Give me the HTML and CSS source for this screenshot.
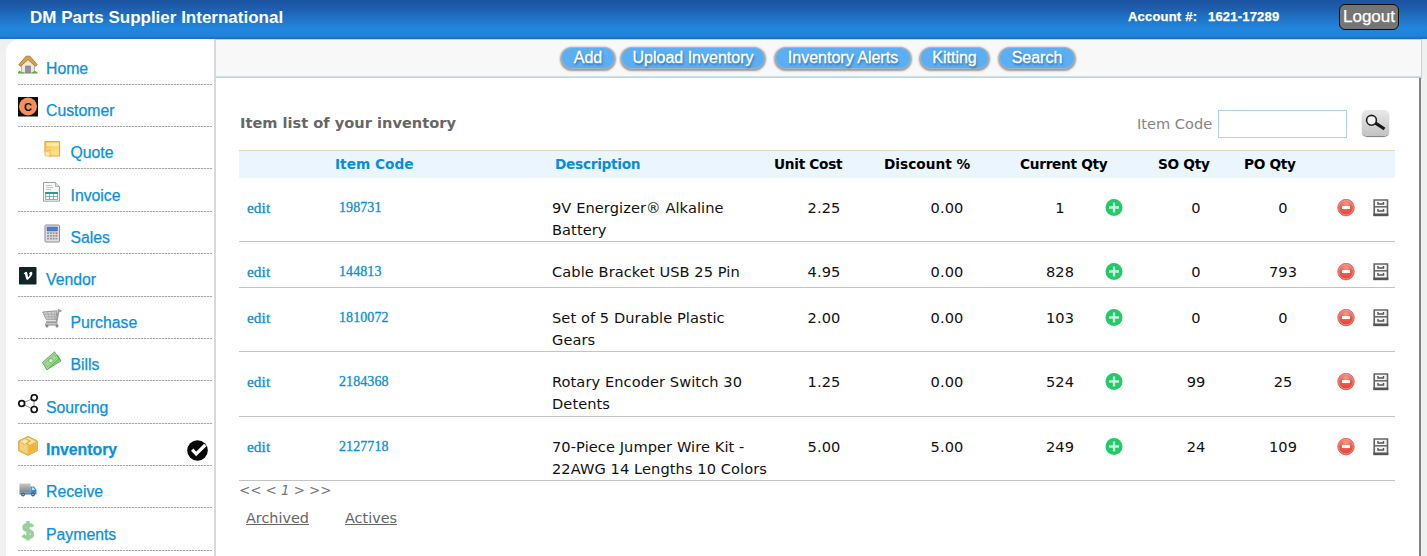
FILE: index.html
```html
<!DOCTYPE html>
<html lang="en">
<head>
<meta charset="utf-8">
<title>DM Parts Supplier International</title>
<link rel="stylesheet" href="styles.css">
</head>
<body>
<svg class="defs" aria-hidden="true">
  <defs>
    <radialGradient id="redfill" cx=".5" cy=".25" r=".75"><stop offset="0" stop-color="#f49b8e"/><stop offset=".6" stop-color="#ea5549"/><stop offset="1" stop-color="#d9443d"/></radialGradient>
    <linearGradient id="amber" x1="0" y1="0" x2="1" y2="1"><stop offset="0" stop-color="#fbc44b"/><stop offset="1" stop-color="#ffe79a"/></linearGradient>
    <linearGradient id="steel" x1="0" y1="0" x2="0" y2="1"><stop offset="0" stop-color="#c9c9cb"/><stop offset="1" stop-color="#7f8184"/></linearGradient>
  </defs>
  <symbol id="plus" viewBox="0 0 18 18"><circle cx="9" cy="8.500" r="8.500" fill="#20cb68"/><path d="M9 3.500v10M4 8.500h10" stroke="#c8f5d9" stroke-width="2.3"/></symbol>
  <symbol id="minus" viewBox="0 0 18 18"><circle cx="9" cy="8.600" r="8.300" fill="url(#redfill)" stroke="#d5574e" stroke-width=".7"/><circle cx="9" cy="8.600" r="7.300" fill="none" stroke="#f6a59c" stroke-width=".7"/><rect x="5" y="7.100" width="8" height="3" rx=".6" fill="#fff"/></symbol>
  <symbol id="cabinet" viewBox="0 0 16 18"><path d="M1.200 1h13.300v15H1.200z" fill="#f4f4f4" stroke="#646464" stroke-width="1.6"/><path d="M.4 14.500h14.900v2.700H.4z" fill="#555"/><path d="M1.200 7.800h13.300" stroke="#646464" stroke-width="1.5"/><path d="M5 3v2h5.500v-2M5 10v2h5.500v-2" fill="none" stroke="#555" stroke-width="1.4"/></symbol>
</svg>
<header class="top">
  <div class="brand">DM Parts Supplier International</div>
  <div class="account"><span class="acct-label">Account #:</span><span class="acct-num">1621-17289</span></div>
  <a class="logout">Logout</a>
</header>
<div class="shell">
  <nav class="side">
    <ul>
      <li><svg class="ico" viewBox="0 0 20 20"><path d="M3.500 10L10 4l6.500 6v8h-13z" fill="#eee8dc" stroke="#aaa194" stroke-width=".7"/><path d="M7.500 18v-7h5v7z" fill="#90949a" stroke="#70757a" stroke-width=".6"/><path d="M.8 9.700L8 1.200h4l7.300 8.500-2 1.500L10 4.600l-7.300 6.600z" fill="#d8a14b" stroke="#a86f29" stroke-width=".8"/><path d="M0 17.500q1.500-3 3-.5l3.500.6v1H0zM13 18.500l1-1q3-3 5.500 0v1z" fill="#61ad3e"/></svg><span>Home</span></li>
      <li><svg class="ico" viewBox="0 0 20 20"><path d="M0 0h20v19.500H0z" fill="#0a0a0a"/><circle cx="10" cy="9.500" r="9" fill="#f5905c"/><text x="10" y="13.500" class="c-mark">C</text></svg><span>Customer</span></li>
      <li class="sub"><svg class="ico" viewBox="0 0 20 20"><path d="M3 2.500h14.500v14.500H7.500L3 12.500z" fill="url(#amber)" stroke="#eda638" stroke-width="1.200"/><path d="M4.500 4h12v3h-12z" fill="#fff3c4" opacity=".7"/><path d="M3 11.500q3 2 4.500-.5 0 4 1.500 6H4q-1 0-1-1z" fill="#fff0bf" stroke="#eda638" stroke-width=".8"/></svg><span>Quote</span></li>
      <li class="sub"><svg class="ico" viewBox="0 0 20 20"><path d="M1.500.5h12l4 4v14.700h-16z" fill="#f7f8f8" stroke="#9ba2a5"/><path d="M13.500.5v4h4" fill="#dfe3e4" stroke="#9ba2a5" stroke-width=".8"/><path d="M4 3.500h6M4 5.500h7M4 7.500h5" stroke="#c3c7ca"/><path d="M3 10h13v2H3z" fill="#2c9b8f"/><path d="M3.500 12v5.500h12V12M3.500 14.500h12M7.500 12v5.500M11.500 12v5.500" fill="none" stroke="#6e9e9a" stroke-width=".8"/></svg><span>Invoice</span></li>
      <li class="sub"><svg class="ico" viewBox="0 0 20 20"><rect x="3" y="1" width="14.500" height="17" rx="1" fill="#e1e1e5" stroke="#8c8c94"/><path d="M5 3h10.500v4H5z" fill="#4b7fd0" stroke="#3966b6" stroke-width=".5"/><path d="M5 9.200h7.500M5 11.900h10.500M5 14.700h10.500" stroke="#96969d" stroke-width="1.800" stroke-dasharray="2.100 .7"/><path d="M13.500 8.200h2v2h-2z" fill="#ec6b50"/></svg><span>Sales</span></li>
      <li><svg class="ico" viewBox="0 0 20 20"><rect x="1" y="1" width="17.500" height="17.500" rx=".8" fill="#112426"/><path d="M5.700 7.300l1.900-1.400q1.300-.5 1.700 1.300l.7 3.300q.3 1 .8.200l1-1.800q.3-1.200-1-.7.900-2.900 2.600-2.500 1.600.5.800 2.700-.9 2.200-4.100 5.200-1.300.9-2-.8l-1.200-4.500q-.3-.5-.8-.1z" fill="#fff"/></svg><span>Vendor</span></li>
      <li class="sub"><svg class="ico" viewBox="0 0 20 20"><path d="M.7 3l14.300-1.200-1.300 9H4.500z" fill="#cfcfcf" stroke="#979797"/><path d="M3 5.200h10.500M4 7.800h9.500M5.500 3.200l2 7.500M9.500 2.700l.6 8M13 2.500l-.7 8" stroke="#a4a4a4" stroke-width=".8"/><path d="M19.500 2.500l-2.700-1.300-2.400 12H4" fill="none" stroke="#9a9a9a" stroke-width="1.800"/><path d="M3 15.500h13" stroke="#adadad" stroke-width="2.400"/><circle cx="5" cy="17" r="1.500" fill="#8b8b8b"/><circle cx="15" cy="17" r="1.500" fill="#8b8b8b"/></svg><span>Purchase</span></li>
      <li class="sub"><svg class="ico" viewBox="0 0 20 20"><path d="M5 18.500L19 10l-3.500-6L2.500 13z" fill="#8ccd83" stroke="#4d9b49" stroke-width=".8"/><path d="M.5 11.500L12.500.8l4.500 6.700L5 19z" fill="#a4dc97" stroke="#56a451" stroke-width=".9"/><path d="M3 12.200L12.200 3.500l2.600 3.800L5.300 16z" fill="none" stroke="#6db966" stroke-width=".7"/><circle cx="8.900" cy="9.700" r="2.200" fill="#e0f2d9" stroke="#60ac5b" stroke-width=".8"/></svg><span>Bills</span></li>
      <li><svg class="ico" viewBox="0 0 20 20"><path d="M4 9.500l12-5.500v12z" fill="none" stroke="#777" stroke-width=".8"/><g fill="#fff" stroke="#111" stroke-width="1.700"><circle cx="3.700" cy="9.500" r="2.900"/><circle cx="16.200" cy="3.700" r="3"/><circle cx="16.200" cy="15.500" r="3"/></g></svg><span>Sourcing</span></li>
      <li class="active"><svg class="ico" viewBox="0 0 20 20"><path d="M.6 5L10 .3 19.400 5v9.700L10 19.400.6 14.700z" fill="#f0c05c" stroke="#d49c38" stroke-width=".8"/><path d="M2.500 5.500L10 1.800l7.500 3.700L10 9.500z" fill="#fbe9ac"/><path d="M2 6.500l7.500 4v7.200L2 13.800z" fill="#f6d27a"/><path d="M18 6.500l-7.500 4v7.200l7.500-3.900z" fill="#f0b33d"/><path d="M8 3l4 2-3.500 2.500 3 1.800" fill="none" stroke="#e5a93c" stroke-width="1.300"/></svg><span>Inventory</span><svg class="check" viewBox="0 0 21 21"><circle cx="10.500" cy="10.500" r="10.300" fill="#080808"/><path d="M5.200 9.700l4 4.300 9-9" fill="none" stroke="#fff" stroke-width="3.200"/></svg></li>
      <li><svg class="ico" viewBox="0 0 20 20"><path d="M1.500 5.500h11V14.500h-11z" fill="url(#steel)"/><path d="M12.500 8.500h3.500l2.500 3.500v4.500h-17v-2h11z" fill="#358dcc"/><path d="M13.800 9.500h1.700l1.500 2.500h-3.200z" fill="#c8e5f4"/><circle cx="5" cy="16.500" r="1.900" fill="#55585c"/><circle cx="15" cy="16.500" r="1.900" fill="#55585c"/><circle cx="5" cy="16.500" r=".7" fill="#ddd"/><circle cx="15" cy="16.500" r=".7" fill="#ddd"/></svg><span>Receive</span></li>
      <li><svg class="ico" viewBox="0 0 20 20"><path d="M15 5.500Q13.500 3.700 10 3.700 6 3.700 6 6.500q0 2.300 4 3 4.500.8 4.500 3.700 0 3.100-4.500 3.100-3.500 0-5.200-2.200M10 0v19.500" fill="none" stroke="#96d19a" stroke-width="3.500"/></svg><span>Payments</span></li>
    </ul>
  </nav>
  <main class="main">
    <div class="toolbar">
      <a class="btn b1">Add</a><a class="btn b2">Upload Inventory</a><a class="btn b3">Inventory Alerts</a><a class="btn b4">Kitting</a><a class="btn b5">Search</a>
    </div>
    <div class="content">
      <div class="titlebar">
        <h1>Item list of your inventory</h1>
        <label class="lookup" for="code">Item Code</label>
        <input id="code" class="codebox" type="text">
        <button class="find" aria-label="Search"><svg viewBox="0 0 27 27"><circle cx="9.500" cy="10.300" r="4.900" fill="#f3f3f3" stroke="#222" stroke-width="1.600"/><path d="M13.500 13.200l9 5.800" stroke="#181818" stroke-width="3.200"/></svg></button>
      </div>
      <div class="table">
        <div class="thead"><a>Item Code</a><a class="tight">Description</a><span class="tight">Unit Cost</span><span>Discount %</span><span class="tight">Current Qty</span><span class="tight">SO Qty</span><span class="tight">PO Qty</span></div>
        <div class="row"><a>edit</a><a class="code">198731</a><p>9V Energizer® Alkaline<br>Battery</p><i>2.25</i><i>0.00</i><i>1</i><svg class="plus"><use href="#plus"/></svg><i>0</i><i>0</i><svg class="minus"><use href="#minus"/></svg><svg class="cab"><use href="#cabinet"/></svg></div>
        <div class="row"><a>edit</a><a class="code">144813</a><p>Cable Bracket USB 25 Pin</p><i>4.95</i><i>0.00</i><i>828</i><svg class="plus"><use href="#plus"/></svg><i>0</i><i>793</i><svg class="minus"><use href="#minus"/></svg><svg class="cab"><use href="#cabinet"/></svg></div>
        <div class="row"><a>edit</a><a class="code">1810072</a><p>Set of 5 Durable Plastic<br>Gears</p><i>2.00</i><i>0.00</i><i>103</i><svg class="plus"><use href="#plus"/></svg><i>0</i><i>0</i><svg class="minus"><use href="#minus"/></svg><svg class="cab"><use href="#cabinet"/></svg></div>
        <div class="row"><a>edit</a><a class="code">2184368</a><p>Rotary Encoder Switch 30<br>Detents</p><i>1.25</i><i>0.00</i><i>524</i><svg class="plus"><use href="#plus"/></svg><i>99</i><i>25</i><svg class="minus"><use href="#minus"/></svg><svg class="cab"><use href="#cabinet"/></svg></div>
        <div class="row"><a>edit</a><a class="code">2127718</a><p>70-Piece Jumper Wire Kit -<br>22AWG 14 Lengths 10 Colors</p><i>5.00</i><i>5.00</i><i>249</i><svg class="plus"><use href="#plus"/></svg><i>24</i><i>109</i><svg class="minus"><use href="#minus"/></svg><svg class="cab"><use href="#cabinet"/></svg></div>
      </div>
      <div class="pager">&lt;&lt; &lt; 1 &gt; &gt;&gt;</div>
      <div class="filters"><a>Archived</a><a>Actives</a></div>
    </div>
  </main>
</div>
</body>
</html>
```
FILE: styles.css
```css
* { box-sizing: border-box; }
body { margin: 0; height: 556px; overflow: hidden; background: #eff1f1; font-family: Verdana, "DejaVu Sans", sans-serif; display: flex; flex-direction: column; }
.defs { position: absolute; width: 0; height: 0; }
svg { display: block; }

.top { height: 39px; flex: none; display: flex; align-items: flex-start; color: #fff; background: linear-gradient(#1b54a0 0, #1d5aa8 15%, #2286de 72%, #2082da 92%, #1b6fc4 98%); font-family: "Liberation Sans", Arial, sans-serif; font-weight: bold; }
.brand { margin-left: 30px; font-size: 17px; line-height: 36px; width: 1098px; }
.account { font-size: 13px; line-height: 34px; width: 211px; display: flex; -webkit-text-stroke: .25px #fff; letter-spacing: .2px; }
.acct-label { width: 80px; }
.logout { margin-top: 4px; width: 60px; height: 26px; border: 1px solid #0b0b0b; border-radius: 6px; background: #757575; font-weight: normal; font-size: 17px; line-height: 24px; text-align: center; -webkit-text-stroke: .25px #fff; }

.shell { flex: 1; display: flex; min-height: 0; }
.side { width: 210px; margin-left: 6px; background: #fff; border-top-left-radius: 14px; border-right: 2px solid #d8d8d8; padding: 3.7px 2px 0 12px; overflow: hidden; flex: none; }
.side ul { list-style: none; margin: 0; padding: 0; }
.side li { height: 42.37px; display: flex; align-items: flex-start; padding-top: 12px; background: repeating-linear-gradient(90deg, #a8a8a8 0 2px, #e8e8e8 2px 3px) 0 100% / 100% 1.3px no-repeat; font-family: "Liberation Sans", Arial, sans-serif; font-size: 15.8px; color: #0a90e0; -webkit-text-stroke: .25px #0a90e0; }
.side li span { margin: 5px 0 0 8px; line-height: 18px; }
.side .sub { padding-left: 24px; }
.side .sub span { margin-left: 8.500px; }
.side .active span { font-weight: bold; }
.ico { width: 20px; height: 20px; flex: none; }
.check { width: 21px; height: 21px; margin: 4px 4px 0 auto; }
.c-mark { font: bold 11px "Liberation Sans", sans-serif; text-anchor: middle; fill: #111; stroke: none; }

.main { flex: 1; margin-right: 5px; display: flex; flex-direction: column; }
.toolbar { height: 39px; background: #f8f8f8; border: 1px solid #b3d7ea; border-left: 0; box-shadow: inset 0 -1px #cfe2ec, 0 1px #ccc; padding: 7px 0 0 344px; display: flex; flex: none; }
.btn { height: 22px; border-radius: 11px; background: #59aef4; border: 1px solid #a5b4bf; box-shadow: 0 1px 2px 1px rgba(90,90,90,.6); color: #fff; font: 16px/20px "Liberation Sans", Arial, sans-serif; -webkit-text-stroke: .3px #fff; text-shadow: 1px 2px 2px rgba(30,70,110,.6); text-align: center; white-space: nowrap; }
.b1 { width: 54px; margin-left: 1px; }
.b2 { width: 144px; margin-left: 6px; }
.b3 { width: 136px; margin-left: 10px; }
.b4 { width: 69px; margin-left: 9px; }
.b5 { width: 76px; margin-left: 10px; }

.content { flex: 1; background: #fff; margin-right: 1px; border-right: 2px solid #828282; padding: 32px 24px 0 23px; }
.titlebar { height: 40px; display: flex; align-items: flex-start; }
.titlebar h1 { margin: 3px 0 0 1px; width: 897px; font-size: 14.6px; line-height: 19px; color: #666; }
.lookup { width: 80.5px; font-size: 14.6px; line-height: 19px; margin-top: 4px; color: #858585; white-space: nowrap; }
.codebox { width: 129px; height: 28px; margin: 0 15px 0 0; border: 1px solid #abd2e9; background: #fff; }
.find { width: 27px; height: 26px; padding: 0; border: 0; border-radius: 5px; background: linear-gradient(#e9e9e9, #c2c2c2); box-shadow: 0 1px 1px #777; }
.find svg { width: 27px; height: 27px; }

.thead { height: 28px; background: #ebf5fe; border-top: 1px solid #dcdcc0; padding-left: 96px; display: grid; grid-template-columns: 220px 219px 110px 136px 138px 86px 1fr; font-weight: bold; font-size: 13.7px; line-height: 27px; color: #000; white-space: nowrap; }
.thead a { color: #078ee0; }
.thead .tight { letter-spacing: -.3px; }
.row { min-height: 46px; padding: 19px 0 0 8px; border-bottom: 1px solid #c4c4c4; display: grid; align-items: start; grid-template-columns: 92px 213px 218px 108px 138px 88px 20px 144px 30px 57px 34px; font-size: 14.6px; letter-spacing: .08px; line-height: 22px; color: #111; white-space: nowrap; }
.row:nth-child(n+5) { min-height: 64.5px; }
.row > a { font-family: Georgia, "Liberation Serif", serif; font-size: 15.3px; color: #0a8fd8; -webkit-text-stroke: .3px #0a8fd8; line-height: 21px; }
.row > .code { font-size: 14px; }
.row p { margin: 0; }
.row i { font-style: normal; text-align: center; }
.plus, .minus { width: 18px; height: 18px; margin-top: 2px; justify-self: center; }
.row .minus, .row .cab { justify-self: end; }
.cab { width: 16px; height: 18px; margin-top: 2px; }
.pager { font-size: 13.5px; letter-spacing: -.1px; font-style: italic; line-height: 19px; color: #777; }
.filters { padding: 8px 0 0 7px; display: flex; gap: 36px; font-size: 14.4px; line-height: 20px; color: #666; text-decoration: underline; }
```
